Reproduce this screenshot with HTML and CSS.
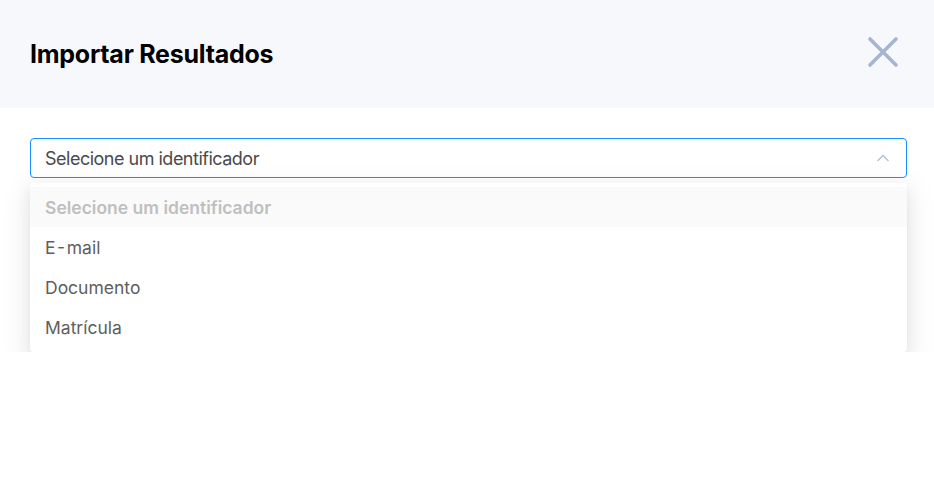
FILE: index.html
```html
<!DOCTYPE html>
<html lang="pt">

<head>
    <meta charset="UTF-8">
    <meta name="viewport" content="width=device-width, initial-scale=1.0">
    <title>Importar Resultados</title>
    <link rel="stylesheet" href="styles.css">
</head>

<body>
    <div class="modal">
        <div class="modal-header">
            <h2 class="modal-title">Importar Resultados</h2>
            <span class="modal-close">
                <svg width="32" height="32" viewBox="0 0 32 32">
                    <path d="M3 3 L29 29 M29 3 L3 29" stroke="#a5b4cf" stroke-width="3.6" stroke-linecap="round" fill="none"/>
                </svg>
            </span>
        </div>

        <div class="modal-body">
            <div class="select-box">
                <span class="select-value">Selecione um identificador</span>
                <svg class="select-arrow" width="14" height="10" viewBox="0 0 14 10">
                    <path d="M1.5 8 L7 2.5 L12.5 8" stroke="#b3bfd2" stroke-width="1.3" fill="none"/>
                </svg>
            </div>
            <div class="select-menu">
                <div class="menu-item item-disabled">Selecione um identificador</div>
                <div class="menu-item">E&#8202;-&#8202;mail</div>
                <div class="menu-item">Documento</div>
                <div class="menu-item">Matrícula</div>
            </div>
        </div>
    </div>
</body>

</html>
```

FILE: styles.css
```css
body {
    margin: 0;
    font-family: Inter, "Noto Sans", sans-serif;
    background: #ffffff;
}

.modal-header {
    height: 108px;
    background: #f7f8fc;
    display: flex;
    align-items: center;
    justify-content: space-between;
    padding: 0 35px 0 30px;
    box-sizing: border-box;
}

.modal-title {
    margin: 0;
    font-size: 25px;
    font-weight: 700;
    color: #000000;
    letter-spacing: -0.25px;
}

.modal-close {
    display: flex;
    margin-top: -5px;
    cursor: pointer;
}

.modal-body {
    padding: 30px 27px 0 30px;
}

.select-box {
    height: 40px;
    border: 1px solid #1890ff;
    border-radius: 4px;
    box-sizing: border-box;
    display: flex;
    align-items: center;
    justify-content: space-between;
    padding: 0 16px 0 14px;
}

.select-value {
    font-size: 18px;
    color: #4a4a4a;
    letter-spacing: -0.5px;
}

.select-menu {
    margin-top: 5px;
    padding: 5px 0 4px;
    background: #ffffff;
    border-radius: 4px;
    box-shadow: 0 3px 6px -4px rgba(0, 0, 0, 0.12), 0 6px 16px 0 rgba(0, 0, 0, 0.08), 0 9px 28px 8px rgba(0, 0, 0, 0.05);
}

.menu-item {
    height: 40px;
    display: flex;
    align-items: center;
    padding: 0 15px;
    font-size: 17.5px;
    color: #5e5e5e;
    margin-top: -1px;
    margin-bottom: 1px;
}

.item-disabled {
    background: #fafafa;
    color: #bfbfbf;
    font-weight: 600;
}
```
